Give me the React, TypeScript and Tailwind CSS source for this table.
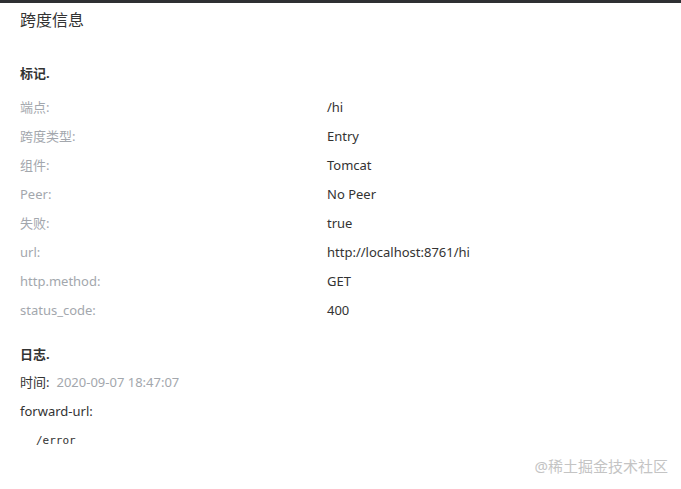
const tags: [string, string][] = [
  ['端点:', '/hi'],
  ['跨度类型:', 'Entry'],
  ['组件:', 'Tomcat'],
  ['Peer:', 'No Peer'],
  ['失败:', 'true'],
  ['url:', 'http://localhost:8761/hi'],
  ['http.method:', 'GET'],
  ['status_code:', '400'],
];

const App = () => {
  return (
    <div
      className="relative h-[489px] w-full overflow-hidden bg-white text-[#333]"
      style={{ fontFamily: '"Noto Sans", "Noto Sans CJK SC", sans-serif' }}
    >
      <div className="h-[3px] bg-[#2f3033]" />

      {/* header */}
      <div className="px-5 pt-[5px]">
        <h2 className="text-base leading-6 text-[#333]">跨度信息</h2>
      </div>

      {/* tags */}
      <div className="px-5 mt-[31px]">
        <h3 className="text-[13px] font-bold leading-5 text-[#333] mb-[10px]">标记.</h3>
        {tags.map(([k, v]) => (
          <div key={k} className="grid grid-cols-[307px_1fr] h-[29px] items-center text-[13px]">
            <span className="text-[#a3a7ad]">{k}</span>
            <span className="text-[#333]">{v}</span>
          </div>
        ))}
      </div>

      {/* logs */}
      <div className="px-5 mt-[19px]">
        <h3 className="text-[13px] font-bold leading-5 text-[#333] mb-[4px]">日志.</h3>
        <div className="h-[29px] flex items-center text-[13px]">
          <span className="text-[#333]">时间:</span>
          <span className="ml-[7px] text-[#a3a7ad]">2020-09-07 18:47:07</span>
        </div>
        <div className="h-[29px] flex items-center text-[13px] text-[#333]">forward-url:</div>
        <pre
          className="pl-4 mt-[5px] text-[11px] leading-5 text-[#333]"
          style={{ fontFamily: '"DejaVu Sans Mono", monospace' }}
        >
          /error
        </pre>
      </div>

      <div className="absolute right-[13px] top-[456px] text-[15px] leading-5 text-[#c4c4c4]">@稀土掘金技术社区</div>
    </div>
  );
};

export default App;
